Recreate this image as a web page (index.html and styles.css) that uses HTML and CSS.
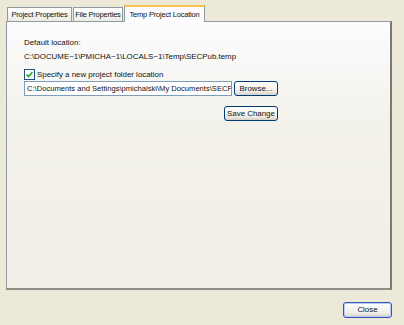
FILE: index.html
```
<!DOCTYPE html>
<html>
<head lang="en">
  <meta charset="UTF-8">
  <title>Temp Project Location</title>
  <link rel="stylesheet" href="styles.css">
</head>
<body>
<div class="dialog">
  <div class="tabs">
    <span class="tab t1">Project Properties</span>
    <span class="tab t2">File Properties</span>
    <span class="tab t3 current">Temp Project Location</span>
  </div>
  <div class="panel">
    <p class="label">Default location:</p>
    <p class="path">C:\DOCUME~1\PMICHA~1\LOCALS~1\Temp\SECPub.temp</p>
    <label class="check">
      <span class="box"><svg width="9" height="9" viewBox="0 0 9 9"><path d="M1.5 4.5 L3.5 6.5 L7.5 2" fill="none" stroke="#21a121" stroke-width="1.6"/></svg></span>
      Specify a new project folder location
    </label>
    <div class="row">
      <span class="input">C:\Documents and Settings\pmichalski\My Documents\SECPub</span>
      <span class="btn browse">Browse...</span>
    </div>
    <div class="row save">
      <span class="btn savebtn">Save Change</span>
    </div>
  </div>
  <div class="footer">
    <span class="btn close">Close</span>
  </div>
</div>
</body>
</html>
```
FILE: styles.css
```
* {
  margin: 0;
  padding: 0
}

body {
  background-color: #ece9d8;
  font-family: "Liberation Sans", Arial, sans-serif;
  font-size: 7.9px;
  color: #111;
}

.dialog {
  width: 404px;
  height: 325px;
  padding: 6px 12px 0 6px;
  box-sizing: border-box;
}

.tabs {
  display: flex;
  align-items: flex-end;
  height: 15px;
  padding-left: 1px;
}

.tab {
  height: 13px;
  line-height: 13px;
  border: 1px solid #919b9c;
  border-bottom: none;
  background: linear-gradient(#fff, #ecebe5);
  margin-right: 1px;
  white-space: nowrap;
  text-align: center;
  font-size: 7.5px;
  letter-spacing: -0.2px;
}

.t1 {
  width: 63px;
}

.t2 {
  width: 48px;
}

.t3 {
  width: 79px;
}

.tab.current {
  height: 15px;
  line-height: 15px;
  border-top: 2px solid #f7c24f;
  background: #fcfcfe;
  position: relative;
  top: 1px;
}

.panel {
  height: 269px;
  border: 1px solid #919b9c;
  border-right: 2px solid #7a7a74;
  border-bottom: 2px solid #8f8d85;
  background: linear-gradient(#fcfcfe, #f2f1ea 40%, #f1efe6);
  padding: 14px 0 0 17px;
  box-sizing: border-box;
}

.label {
  height: 14px;
  line-height: 14px;
}

.path {
  height: 14px;
  line-height: 14px;
}

.check {
  display: flex;
  align-items: center;
  margin-top: 4px;
  height: 13px;
}

.check .box {
  width: 11px;
  height: 11px;
  border: 1px solid #1c5180;
  background: #fff;
  box-sizing: border-box;
  margin-right: 2px;
  display: flex;
  align-items: center;
  justify-content: center;
}

.row {
  display: flex;
  align-items: center;
  width: 254px;
}

.input {
  flex-shrink: 0;
  width: 208px;
  height: 15px;
  line-height: 13px;
  border: 1px solid #7f9db9;
  background: #fff;
  overflow: hidden;
  white-space: nowrap;
  padding-left: 2px;
  box-sizing: border-box;
  margin-right: 2px;
  font-size: 7.6px;
}

.btn {
  display: inline-block;
  height: 15px;
  line-height: 13px;
  border: 1px solid #003c74;
  border-radius: 3px;
  background: linear-gradient(#fff, #f0efe9 70%, #d6d0c5);
  box-sizing: border-box;
  text-align: center;
  white-space: nowrap;
}

.browse {
  width: 44px;
}

.savebtn {
  width: 54px;
}

.save {
  justify-content: flex-end;
  margin-top: 10px;
}

.footer {
  display: flex;
  justify-content: flex-end;
  margin-top: 12px;
}

.close {
  width: 49px;
  height: 16px;
  border-color: #3c50b4;
  box-shadow: inset 0 0 0 1px #b6cdfb;
}
```
